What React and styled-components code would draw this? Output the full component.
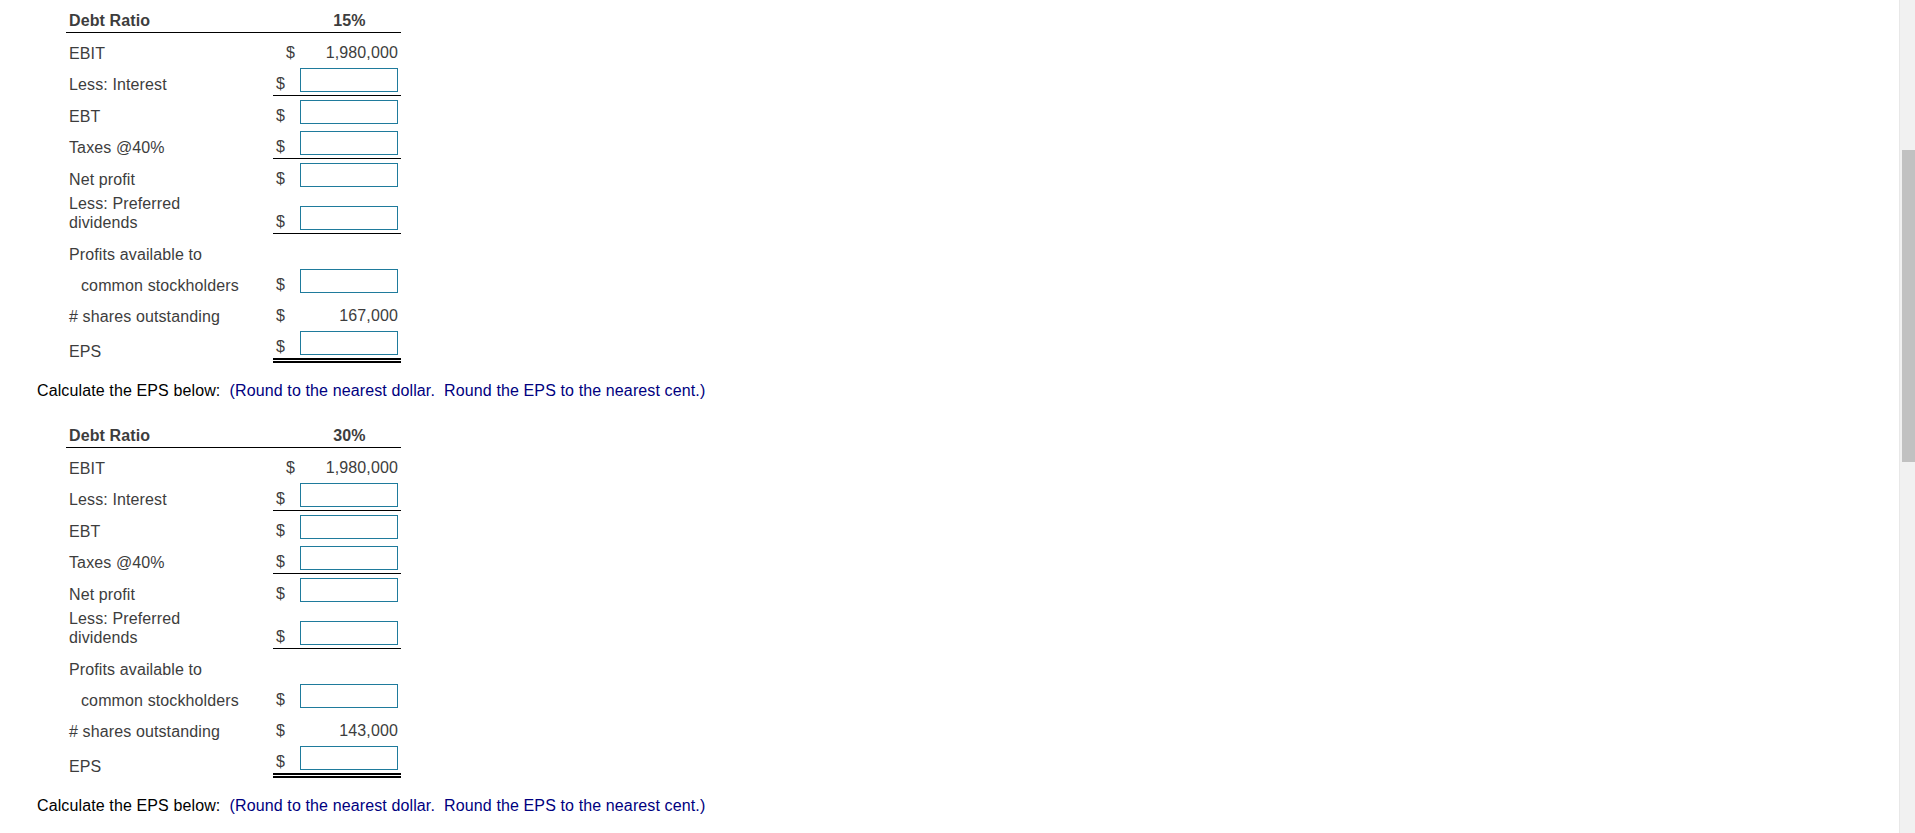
import React from 'react';
import styled, { createGlobalStyle } from 'styled-components';

const GlobalStyle = createGlobalStyle`
    html, body {
        margin: 0;
        padding: 0;
        overflow: hidden;
        background: #fff;
    }
    body {
        font-family: 'Liberation Sans', Arial, sans-serif;
        font-size: 16px;
    }
`;

const tables = [
    { ratio: '15%', shares: '167,000' },
    { ratio: '30%', shares: '143,000' },
];

const buildRows = (shares) => [
    { label: 'EBIT', dollar: 'right', value: '1,980,000' },
    { label: 'Less: Interest', input: true, rule: 'single' },
    { label: 'EBT', input: true },
    { label: 'Taxes @40%', input: true, rule: 'single' },
    { label: 'Net profit', input: true },
    { label: ['Less: Preferred', 'dividends'], input: true, rule: 'single' },
    { label: 'Profits available to', dollar: 'none' },
    { label: 'common stockholders', indent: true, input: true },
    { label: '# shares outstanding', value: shares },
    { label: 'EPS', input: true, rule: 'double', sink: true },
];

const ruleWidth = { single: 1, double: 5 };

const StatementRow = ({ row }) => {
    const border = ruleWidth[row.rule] || 0;
    const lines = Array.isArray(row.label) ? row.label : [row.label];

    return (
        <Row>
            <Label $indent={row.indent} $gap={row.sink ? 2 : 1 + border}>
                {lines.map((line, i) => (
                    <React.Fragment key={line}>
                        {i > 0 && <br />}
                        {line}
                    </React.Fragment>
                ))}
            </Label>
            <Amount $rule={row.rule}>
                <Dollar $align={row.dollar}>
                    {row.dollar === 'none' ? '' : '$'}
                </Dollar>
                {row.input ? (
                    <AnswerInput type='text' aria-label={lines.join(' ')} />
                ) : (
                    <Value>{row.value}</Value>
                )}
            </Amount>
        </Row>
    );
};

const DebtTable = ({ ratio, shares }) => (
    <Table>
        <HeaderRow>
            <HeadCell>Debt Ratio</HeadCell>
            <span />
            <HeadCell $center>{ratio}</HeadCell>
        </HeaderRow>
        {buildRows(shares).map((row) => (
            <StatementRow key={row.label} row={row} />
        ))}
    </Table>
);

const App = () => (
    <Page>
        <GlobalStyle />
        {tables.map((t) => (
            <Section key={t.ratio}>
                <DebtTable ratio={t.ratio} shares={t.shares} />
                <Instruction>
                    Calculate the EPS below:&nbsp;{' '}
                    <Hint>
                        (Round to the nearest dollar.&nbsp; Round the EPS to the
                        nearest cent.)
                    </Hint>
                </Instruction>
            </Section>
        ))}
        <ScrollTrack>
            <ScrollThumb />
        </ScrollTrack>
    </Page>
);

export default App;

// *** STYLES ***

const Page = styled.div`
    padding: 11px 0 0 37px;
    color: #3d3d3d;
    font-family: 'Liberation Sans', Arial, sans-serif;
    font-size: 16px;
    letter-spacing: 0.12px;
`;

const Section = styled.section`
    & + & {
        margin-top: 26px;
    }
`;

const Table = styled.div`
    width: 335px;
    margin-left: 29px;
`;

const HeaderRow = styled.div`
    display: grid;
    grid-template-columns: 207px 25px 103px;
    align-items: end;
    padding-bottom: 2px;
    border-bottom: 1px solid #000;
`;

const HeadCell = styled.span`
    font-weight: bold;
    line-height: 19px;
    padding-left: ${({ $center }) => ($center ? 0 : 3)}px;
    text-align: ${({ $center }) => ($center ? 'center' : 'left')};
`;

const Row = styled.div`
    display: grid;
    grid-template-columns: 207px 128px;
    align-items: end;
`;

const Label = styled.div`
    line-height: 19px;
    padding: 4px 0 0 ${({ $indent }) => ($indent ? 15 : 3)}px;
    margin-bottom: ${({ $gap }) => $gap}px;
`;

const Amount = styled.div`
    display: grid;
    grid-template-columns: 25px 103px;
    align-items: end;
    min-height: 24px;
    padding: 4px 0 3px;
    border-bottom: ${({ $rule }) =>
        $rule === 'double'
            ? '5px double #000'
            : $rule === 'single'
            ? '1px solid #000'
            : '0'};
`;

const Dollar = styled.span`
    line-height: 19px;
    margin-bottom: -1px;
    padding: 0 3px;
    text-align: ${({ $align }) => ($align === 'right' ? 'right' : 'left')};
`;

const Value = styled.span`
    line-height: 19px;
    margin-bottom: -1px;
    padding-right: 3px;
    text-align: right;
`;

const AnswerInput = styled.input`
    justify-self: end;
    box-sizing: border-box;
    width: 98px;
    height: 24px;
    margin: 0 3px 0 0;
    padding: 0 4px;
    border: 1px solid #1f7b9c;
    border-radius: 0;
    background: #fff;
    font: inherit;
    outline: none;
`;

const Instruction = styled.p`
    margin: 18px 0 0;
    line-height: 19px;
    color: #000;
`;

const Hint = styled.span`
    color: #000080;
`;

const ScrollTrack = styled.div`
    position: fixed;
    top: 0;
    right: 0;
    width: 15px;
    height: 100vh;
    background: #f1f1f1;
    border-left: 1px solid #e8e8e8;
`;

const ScrollThumb = styled.div`
    position: absolute;
    top: 150px;
    left: 2px;
    right: 0;
    height: 312px;
    background: #c1c1c1;
`;
